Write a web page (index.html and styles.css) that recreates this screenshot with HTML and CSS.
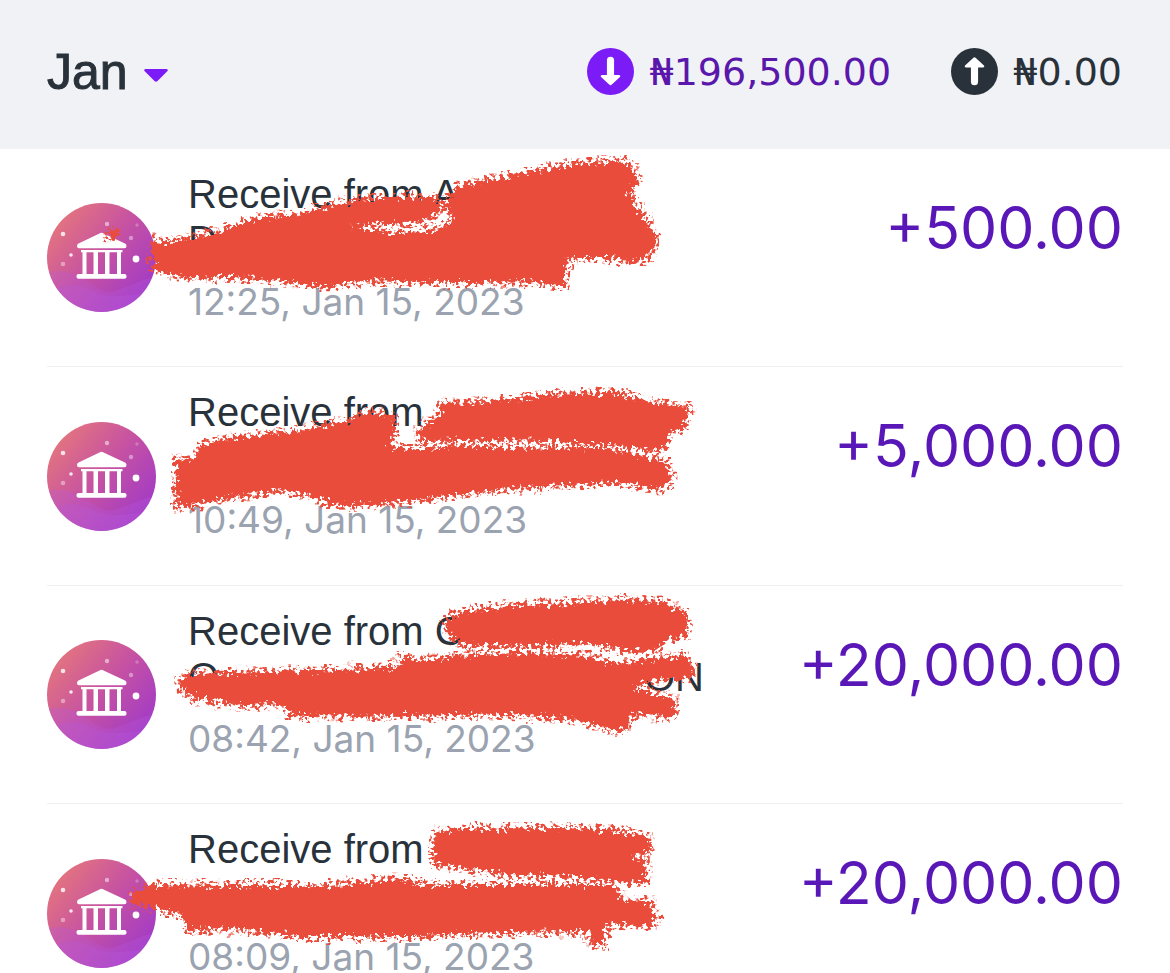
FILE: index.html
```html
<!DOCTYPE html>
<html lang="en">
<head>
  <meta charset="UTF-8">
  <meta name="viewport" content="width=device-width, initial-scale=1.0">
  <title>Transactions</title>
  <link rel="stylesheet" href="styles.css">
</head>
<body>
  <!-- Shared artwork -->
  <svg class="defs" aria-hidden="true">
    <defs>
      <linearGradient id="badge" x1="0.1" y1="0.15" x2="0.9" y2="0.8">
        <stop offset="0" stop-color="#e3747f"/>
        <stop offset="0.5" stop-color="#c652a2"/>
        <stop offset="1" stop-color="#a43cc4"/>
      </linearGradient>
      <clipPath id="round"><circle cx="54.5" cy="54.5" r="54.5"/></clipPath>
      <filter id="crayon" x="-5%" y="-10%" width="110%" height="120%" color-interpolation-filters="sRGB">
        <feTurbulence type="fractalNoise" baseFrequency="0.25" numOctaves="2" seed="4" result="noise"/>
        <feDisplacementMap in="SourceGraphic" in2="noise" scale="17" xChannelSelector="R" yChannelSelector="G" result="shifted"/>
        <feGaussianBlur in="shifted" stdDeviation="0.6" result="rough"/>
        <feMorphology in="shifted" operator="dilate" radius="3" result="wide"/>
        <feColorMatrix in="noise" type="matrix" values="0 0 0 0 0  0 0 0 0 0  0 0 0 0 0  0 0 8 0 -4.1" result="specks"/>
        <feComposite in="wide" in2="specks" operator="in" result="fringe"/>
        <feMerge>
          <feMergeNode in="fringe"/>
          <feMergeNode in="rough"/>
        </feMerge>
      </filter>
    </defs>
    <symbol id="bank" viewBox="0 0 109 109">
      <g clip-path="url(#round)">
        <rect width="109" height="109" fill="url(#badge)"/>
        <path d="M0 70C12 65 26 69 38 77C48 84 58 91 68 88C82 83 92 78 109 73V109H0Z" fill="#b65be0" opacity=".28"/>
        <path d="M0 92C18 77 34 81 50 90C70 98 88 88 109 92V109H0Z" fill="#b65be0" opacity=".28"/>
        <g fill="#fff">
          <circle cx="16" cy="31" r="2.3" opacity=".8"/>
          <circle cx="60" cy="21" r="2.2" opacity=".5"/>
          <circle cx="90" cy="22" r="1.7" opacity=".25"/>
          <circle cx="84" cy="35" r="2.2" opacity=".4"/>
          <circle cx="89" cy="56" r="3.4"/>
          <circle cx="24" cy="52" r="1.8" opacity=".85"/>
          <circle cx="16" cy="61" r="2.3" opacity=".4"/>
          <path d="M52.500 30.400Q54.500 29.300 56.500 30.400L78 40.500Q79.500 41.300 79.500 43Q79.500 45.300 77.500 45.300H32Q30 45.300 30 43Q30 41.300 31.500 40.500Z"/>
          <path d="M34 47H75.500V49.300H74V71H70V49.300H62.500V71H58V49.300H51V71H46.500V49.300H39.500V71H35.500V49.300H34Z"/>
          <rect x="29.500" y="71" width="50" height="4.800" rx="2"/>
        </g>
      </g>
    </symbol>
  </svg>

  <header class="summary">
    <button class="month" type="button">
      Jan
      <svg class="caret" viewBox="0 0 24 13" aria-hidden="true"><path d="M1.500 0H22.500Q25 .7 23 2.500L13.500 12Q12 13.500 10.500 12L1 2.500Q-1 .7 1.500 0Z" fill="#7b1cf7"/></svg>
    </button>
    <div class="totals">
      <div class="total total-in">
        <svg class="arrow" viewBox="0 0 46 46" aria-hidden="true">
          <circle cx="23" cy="23" r="23" fill="#7b1cf7"/>
          <path d="M23 12V30" stroke="#fff" stroke-width="7" stroke-linecap="round"/>
          <path d="M14.500 26.500H31.500Q33.500 27.200 32 28.600L24.300 35.800Q23 37 21.700 35.800L14 28.600Q12.500 27.200 14.500 26.500Z" fill="#fff"/>
        </svg>
        <span>₦196,500.00</span>
      </div>
      <div class="total total-out">
        <svg class="arrow" viewBox="0 0 46 46" aria-hidden="true">
          <circle cx="23" cy="23" r="23" fill="#29323a"/>
          <path d="M23 17V33" stroke="#fff" stroke-width="7" stroke-linecap="round"/>
          <path d="M14.500 19H31.500Q33.500 18.300 32 16.900L24.300 9.700Q23 8.500 21.700 9.700L14 16.900Q12.500 18.300 14.500 19Z" fill="#fff"/>
        </svg>
        <span>₦0.00</span>
      </div>
    </div>
  </header>

  <ul class="transactions">
    <li class="transaction">
      <div class="row">
        <svg class="icon" aria-hidden="true"><use href="#bank"/></svg>
        <div class="details">
          <p class="title">Receive from A</p>
          <p class="title">D</p>
          <time class="date">12:25, Jan 15, 2023</time>
        </div>
        <span class="amount">+500.00</span>
      </div>
      <svg class="scribble" viewBox="0 0 720 240" aria-hidden="true">
        <path fill-rule="evenodd" d="M152 90L165 95L190 89L215 84L230 79L253 70L300 65L343 54L383 49L433 49L441 56L447 54L457 37L503 29L533 22L580 15L617 12L633 18L638 34L628 44L643 68L657 91L650 107L633 113L610 109L567 109L565 137L533 132L483 133L417 133L367 131L323 138L283 132L233 128L183 128L153 121ZM350 78L385 74L410 75L430 70L437 62L448 58L452 72L430 83L400 84L375 82Z"/>
        <path d="M106 86L112 80L118 84L113 89Z"/>
      </svg>
    </li>

    <li class="transaction">
      <div class="row">
        <svg class="icon" aria-hidden="true"><use href="#bank"/></svg>
        <div class="details">
          <p class="title">Receive from</p>
          <p class="title">&nbsp;</p>
          <time class="date">10:49, Jan 15, 2023</time>
        </div>
        <span class="amount">+5,000.00</span>
      </div>
      <svg class="scribble" viewBox="0 0 720 240" aria-hidden="true">
        <path d="M418 64L439 49L443 36L490 35L546 28L616 26L651 35L689 40L684 62L669 64L665 80L651 84L627 80L546 74L493 73L422 74Z"/>
        <path d="M175 94L195 91L201 79L230 71L300 64L346 54L371 46L393 49L395 65L388 78L406 82L476 78L511 82L599 80L634 87L668 97L671 113L662 122L616 115L511 121L434 131L378 137L335 139L311 128L279 123L230 131L177 140Z"/>
      </svg>
    </li>

    <li class="transaction">
      <div class="row">
        <svg class="icon" aria-hidden="true"><use href="#bank"/></svg>
        <div class="details">
          <p class="title">Receive from C</p>
          <p class="title spread"><span>O</span><span>ON</span></p>
          <time class="date">08:42, Jan 15, 2023</time>
        </div>
        <span class="amount">+20,000.00</span>
      </div>
      <svg class="scribble" viewBox="0 0 720 240" aria-hidden="true">
        <path d="M446 35L466 25L517 20L571 18L621 14L664 16L688 30L686 50L664 54L653 67L624 64L589 57L530 60L464 59L448 48Z"/>
        <path d="M179 95L192 88L267 86L374 83L403 79L396 71L417 75L456 70L517 67L589 70L614 79L639 75L685 70L695 84L688 93L646 95L635 103L675 113L675 131L631 128L627 143L614 145L574 133L517 128L410 130L292 129L281 118L242 119L194 112L182 104Z"/>
      </svg>
    </li>

    <li class="transaction">
      <div class="row">
        <svg class="icon" aria-hidden="true"><use href="#bank"/></svg>
        <div class="details">
          <p class="title">Receive from</p>
          <p class="title">&nbsp;</p>
          <time class="date">08:09, Jan 15, 2023</time>
        </div>
        <span class="amount">+20,000.00</span>
      </div>
      <svg class="scribble" viewBox="0 0 720 240" aria-hidden="true">
        <path d="M432 41L437 28L459 25L584 24L652 32L649 48L631 51L646 58L645 78L620 77L549 71L513 71L477 66L435 60Z"/>
        <path d="M131 88L152 81L227 82L334 82L399 75L424 81L513 81L613 81L624 97L648 96L657 113L650 122L606 119L602 141L592 141L588 127L513 128L424 132L299 132L227 124L188 126L181 110L156 104L135 100Z"/>
      </svg>
    </li>
  </ul>
</body>
</html>
```

FILE: styles.css
```css
body {
  margin: 0;
  background-color: #fff;
  color: #29323a;
  font-family: "Liberation Sans", Arial, sans-serif;
}
.defs {
  position: absolute;
  width: 0;
  height: 0;
}

/* Month summary */
.summary {
  display: flex;
  align-items: center;
  justify-content: space-between;
  box-sizing: border-box;
  min-height: 149px;
  padding: 0 48px 6px 47px;
  background-color: #f1f2f6;
}
.month {
  display: flex;
  align-items: center;
  gap: 16px;
  padding: 0;
  border: none;
  background: none;
  color: inherit;
  font-family: inherit;
  font-size: 50px;
  line-height: 60px;
  -webkit-text-stroke: 1px #29323a;
  cursor: pointer;
}
.caret {
  width: 24px;
  height: 13px;
  margin-top: 8px;
}
.totals {
  display: flex;
  gap: 60px;
}
.total {
  display: flex;
  align-items: center;
  gap: 15px;
  font-family: "DejaVu Sans", sans-serif;
  font-size: 38px;
  line-height: 46px;
}
.total-in {
  color: #5a17ab;
}
.arrow {
  width: 47px;
  height: 47px;
}

/* Transaction list */
.transactions {
  margin: 0;
  padding: 0;
  list-style: none;
}
.transaction {
  position: relative;
  padding: 0 47px;
}
.row {
  display: flex;
  align-items: center;
  gap: 32px;
  box-sizing: border-box;
  min-height: 218px;
  border-bottom: 1px solid #f0f0f2;
}
.transaction:nth-child(even) .row {
  min-height: 219px;
}
.icon {
  flex: none;
  width: 109px;
  height: 109px;
}
.details {
  flex: 1;
  align-self: flex-start;
  padding-top: 22px;
}
.title {
  max-width: 516px;
  margin: 0;
  font-size: 40px;
  line-height: 46px;
  white-space: nowrap;
}
.spread {
  display: flex;
  justify-content: space-between;
}
.date {
  display: block;
  margin-top: 16px;
  color: #9aa3af;
  font-family: Inter, sans-serif;
  font-size: 37px;
  line-height: 46px;
}
.amount {
  align-self: flex-start;
  padding-top: 43px;
  color: #5a17b8;
  font-family: Inter, sans-serif;
  font-size: 59px;
  line-height: 72px;
}
.scribble {
  position: absolute;
  z-index: 1;
  top: 0;
  left: 0;
  width: 720px;
  height: 240px;
  fill: #ea4c3b;
  filter: url(#crayon);
  pointer-events: none;
}
```
